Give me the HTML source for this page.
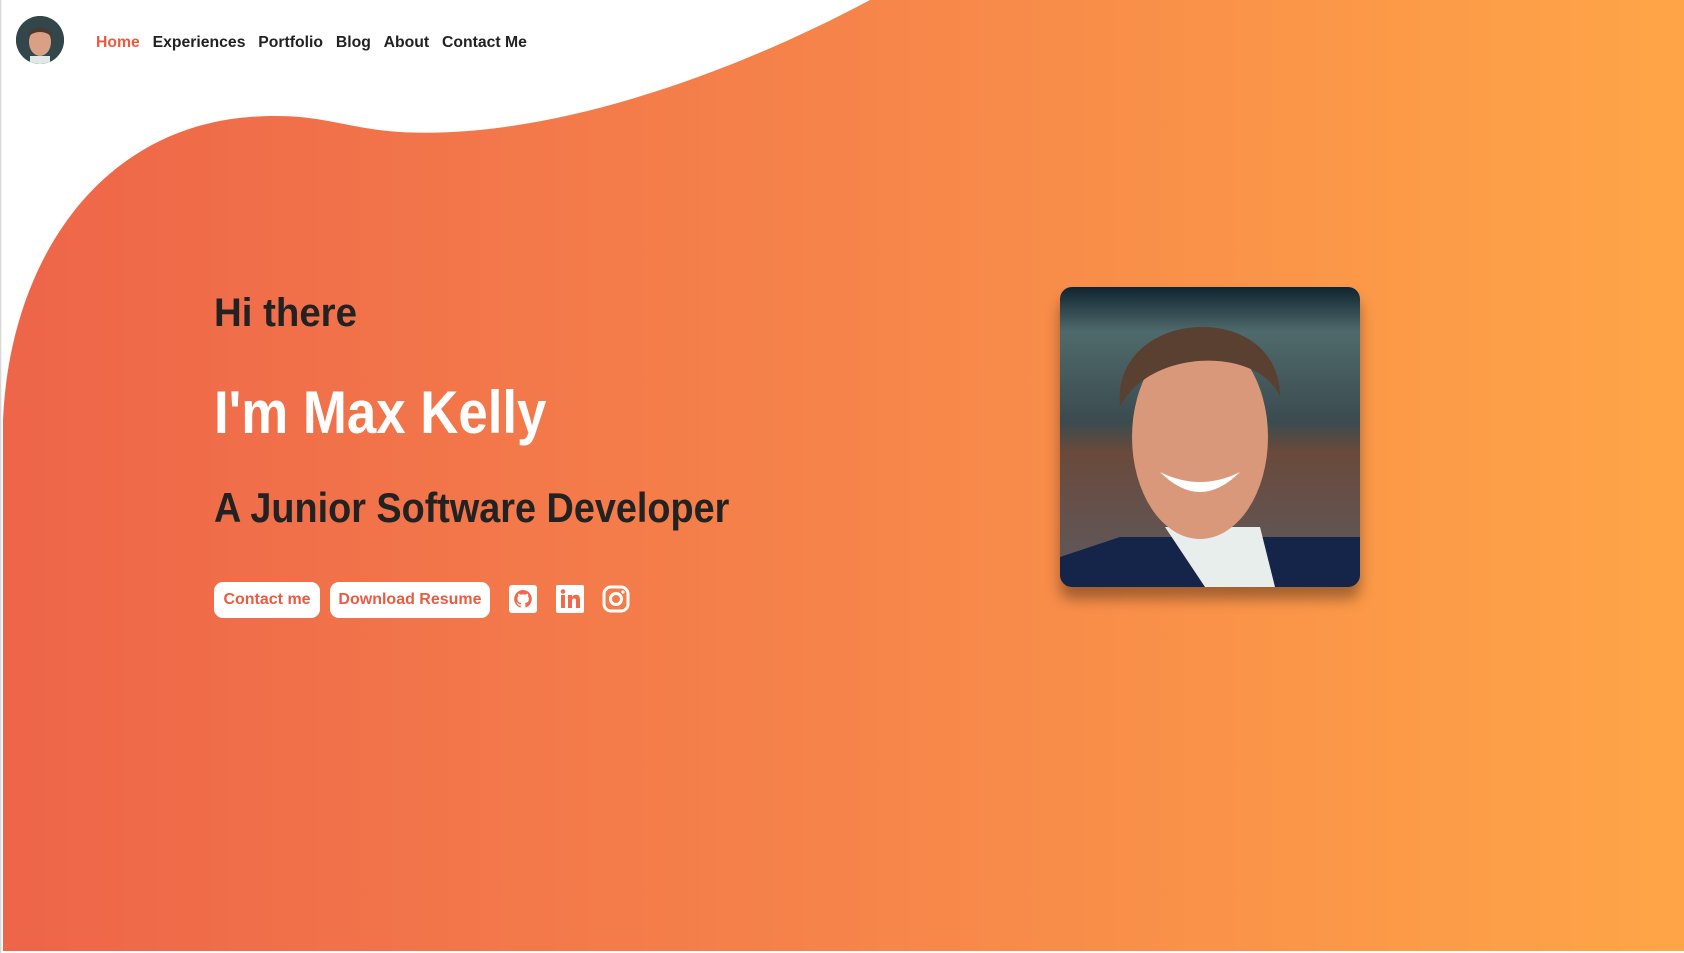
<!DOCTYPE html>
<html><head><meta charset="utf-8"><style>
html,body{margin:0;padding:0;width:1684px;height:953px;overflow:hidden;background:#fff;font-family:"Liberation Sans",Arial,sans-serif}
.bg{position:absolute;left:0;top:0}
.lstrip{position:absolute;left:0;top:0;width:2px;height:953px;background:linear-gradient(90deg,#ccc,#fff)}
.nav{position:absolute;top:34px;left:96px;font-weight:bold;font-size:16px;color:#222;white-space:nowrap;transform:scaleX(.985);transform-origin:left}
.nav span{margin-right:13px}
.av{position:absolute;left:16px;top:16px;width:48px;height:48px;border-radius:50%;overflow:hidden;background:#2b3f44}
h1,h2,h3{margin:0;position:absolute;font-weight:bold;white-space:nowrap;transform-origin:left}
.hi{left:214px;top:291px;font-size:40px;color:#222;transform:scaleX(.96)}
.mk{left:214px;top:378px;font-size:60px;color:#fff;transform:scaleX(.88)}
.jr{left:214px;top:484px;font-size:42px;color:#222;transform:scaleX(.9)}
.btn{position:absolute;top:582px;height:36px;background:#fff;border-radius:9px;color:#e85c40;font-weight:bold;font-size:16px;line-height:36px;text-align:center}
.ic{position:absolute;top:585px}
.photo{position:absolute;left:1060px;top:287px;width:300px;height:300px;border-radius:12px;overflow:hidden;box-shadow:0 12px 14px rgba(0,0,0,.35)}
</style></head><body>
<svg class="bg" width="1684" height="953"><defs><linearGradient id="g" x1="0" x2="1"><stop offset="0" stop-color="#ee6549"/><stop offset=".5" stop-color="#f6844a"/><stop offset="1" stop-color="#ffa547"/></linearGradient></defs>
<path d="M870,0 C720,80 540,140 400,132 C340,128 320,112 250,117 C100,128 10,260 3,420 L3,951 L1684,951 L1684,0 Z" fill="url(#g)"/></svg>
<div class="lstrip"></div>
<div class="av"><svg width="48" height="48"><rect width="48" height="48" fill="#33474b"/><ellipse cx="24" cy="26" rx="11" ry="14" fill="#d9a085"/><path d="M12,22 C12,8 36,8 36,22 C32,14 16,14 12,22Z" fill="#4a3a2e"/><rect x="14" y="40" width="20" height="10" fill="#dfe9e6"/></svg></div>
<div class="nav"><span style="color:#ee5a3f">Home</span><span>Experiences</span><span>Portfolio</span><span>Blog</span><span>About</span><span>Contact Me</span></div>
<h2 class="hi">Hi there</h2>
<h1 class="mk">I'm Max Kelly</h1>
<h3 class="jr">A Junior Software Developer</h3>
<div class="btn" style="left:214px;width:106px">Contact me</div>
<div class="btn" style="left:330px;width:160px">Download Resume</div>
<svg class="ic" style="left:509px" width="28" height="28" viewBox="0 0 28 28"><rect width="28" height="28" rx="3" fill="#fff"/><path d="M14 5a9 9 0 0 0-2.8 17.5c.4.1.6-.2.6-.4v-1.6c-2.5.5-3-1.1-3-1.1-.4-1-1-1.3-1-1.3-.8-.6.1-.6.1-.6.9.1 1.4.9 1.4.9.8 1.4 2.1 1 2.6.8.1-.6.3-1 .6-1.2-2-.2-4.1-1-4.1-4.4 0-1 .3-1.8.9-2.4-.1-.2-.4-1.1.1-2.4 0 0 .8-.2 2.5.9a8.5 8.5 0 0 1 4.5 0c1.7-1.1 2.5-.9 2.5-.9.5 1.3.2 2.2.1 2.4.6.6.9 1.4.9 2.4 0 3.4-2.1 4.2-4.1 4.4.3.3.6.8.6 1.6v2.4c0 .2.2.5.6.4A9 9 0 0 0 14 5z" fill="#ef6a4a"/></svg>
<svg class="ic" style="left:556px" width="28" height="28" viewBox="0 0 28 28"><rect width="28" height="28" rx="2" fill="#fff"/><rect x="5" y="10" width="4" height="13" fill="#ef6a4a"/><circle cx="7" cy="6.5" r="2.3" fill="#ef6a4a"/><path d="M12 10h4v2c1-1.6 2.4-2.3 4-2.3 3 0 4 2 4 5V23h-4v-7c0-1.6-.6-2.5-1.9-2.5-1.4 0-2.1 1-2.1 2.5v7h-4z" fill="#ef6a4a"/></svg>
<svg class="ic" style="left:602px" width="28" height="28" viewBox="0 0 28 28"><rect x="2" y="2" width="24" height="24" rx="7" fill="none" stroke="#fff" stroke-width="3"/><circle cx="14" cy="14" r="5.5" fill="none" stroke="#fff" stroke-width="3"/><circle cx="21" cy="7" r="1.6" fill="#fff"/></svg>
<div class="photo"><svg width="300" height="300"><defs><linearGradient id="p" x1="0" y1="0" x2="0" y2="1"><stop offset="0" stop-color="#0f2430"/><stop offset=".15" stop-color="#4f6a6c"/><stop offset=".45" stop-color="#3b4b4f"/><stop offset=".55" stop-color="#6a4a3c"/><stop offset="1" stop-color="#5e5a60"/></linearGradient></defs>
<rect width="300" height="300" fill="url(#p)"/>
<path d="M60,250 L300,250 L300,300 L0,300 L0,270Z" fill="#15254a"/>
<path d="M105,240 L200,240 L215,300 L145,300Z" fill="#e8eeec"/>
<ellipse cx="140" cy="150" rx="68" ry="102" fill="#d9987a"/>
<path d="M60,120 C50,20 220,10 220,110 C200,60 90,60 60,120Z" fill="#5a4030"/>
<path d="M100,185 Q140,205 180,185 Q140,225 100,185Z" fill="#fff"/>
</svg></div>
</body></html>
